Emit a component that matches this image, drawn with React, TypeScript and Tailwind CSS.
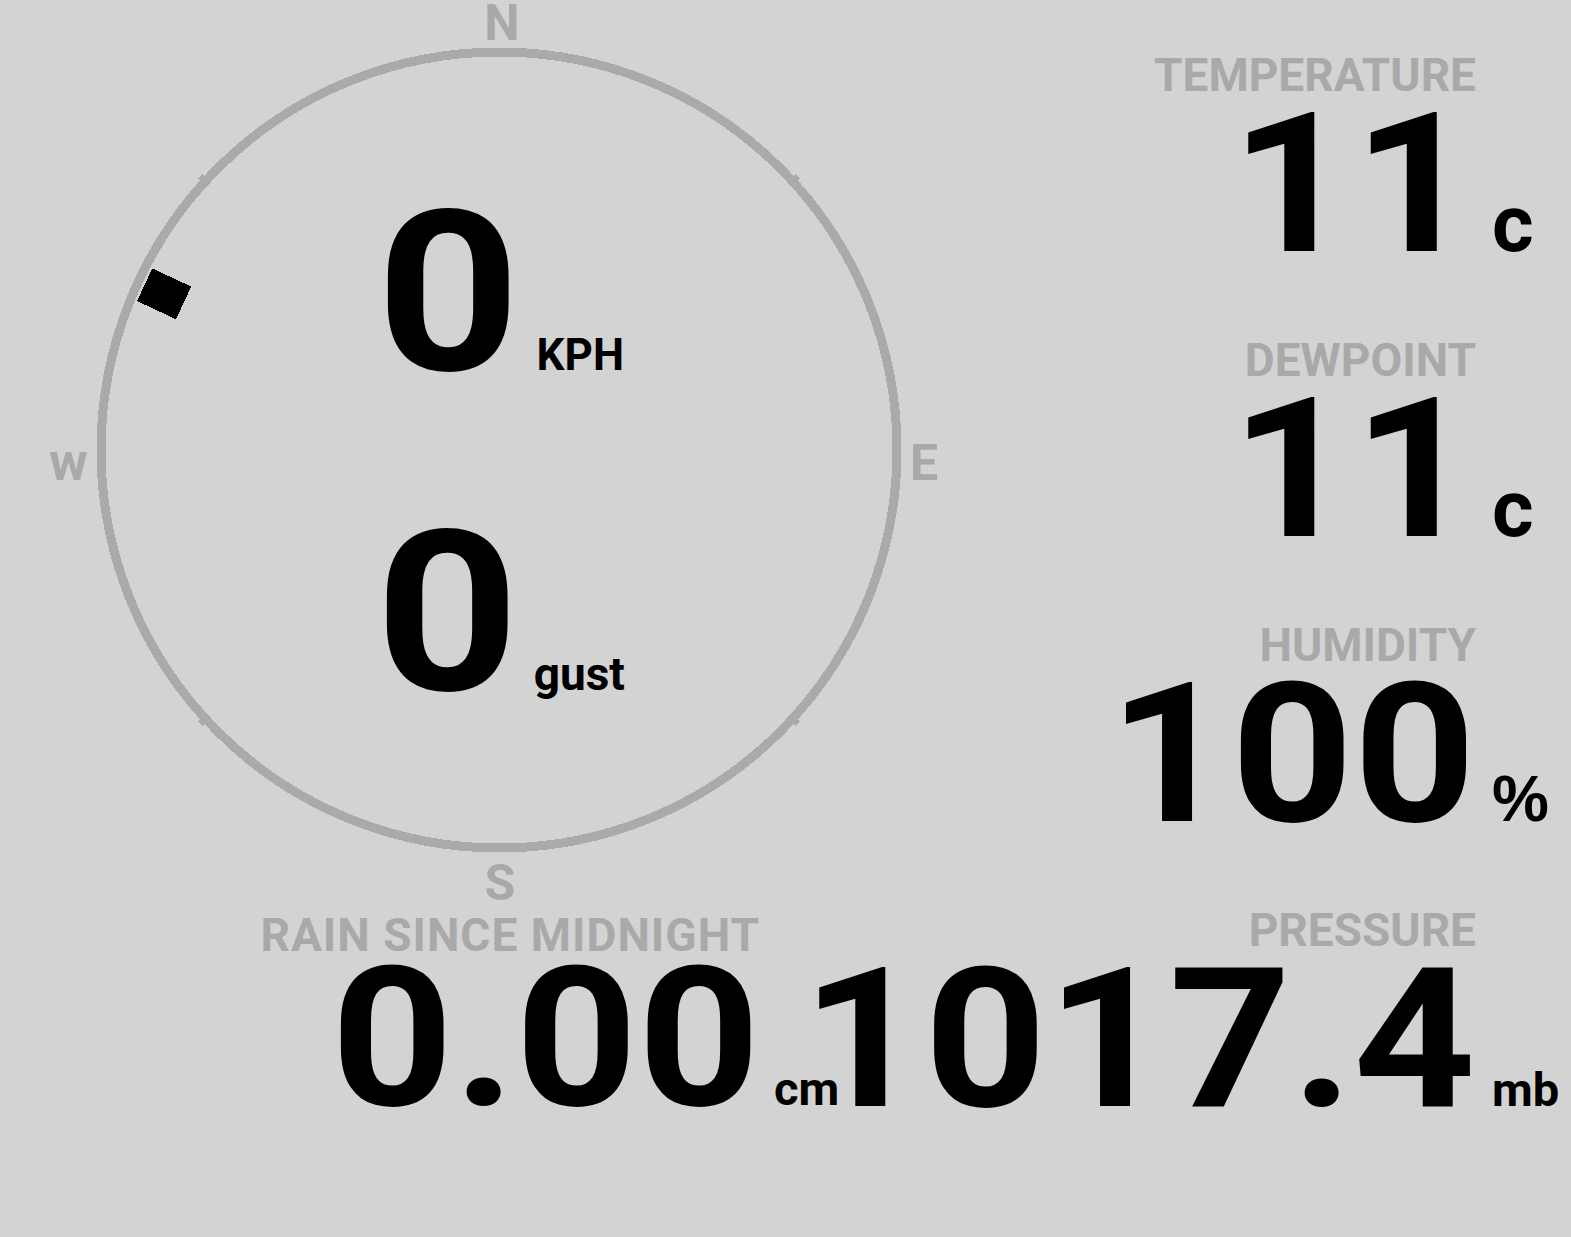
import React from 'react';

// Weather station dashboard: wind compass on the left, readings on the right

const LABEL = "font-['Roboto',sans-serif] font-bold text-[46px] leading-none text-[#a9a9a9] whitespace-nowrap";
const BIG = "inline-block font-['Roboto',sans-serif] font-bold text-[194px] leading-none text-black whitespace-nowrap origin-right scale-x-[1.1]";
const UNIT = "font-['Roboto',sans-serif] font-bold text-[47px] leading-none text-black whitespace-nowrap";

type Reading = { label: string; value: string; unit: string; unitClass?: string };

const readings: Reading[] = [
  { label: 'TEMPERATURE', value: '11', unit: 'c', unitClass: "font-['Roboto',sans-serif] font-bold text-[80px] leading-none text-black" },
  { label: 'DEWPOINT', value: '11', unit: 'c', unitClass: "font-['Roboto',sans-serif] font-bold text-[80px] leading-none text-black" },
  { label: 'HUMIDITY', value: '100', unit: '%', unitClass: "font-['Liberation_Sans',Arial,sans-serif] font-bold text-[64px] leading-none text-black" },
];

function ReadingBlock({ label, value, unit, unitClass }: Reading) {
  return (
    <div className="grid h-[285px] grid-cols-[minmax(0,1fr)_79px] content-start items-baseline">
      <div className={`${LABEL} col-start-1 row-start-1 mr-[16px] justify-self-end`}>{label}</div>
      <div className={`${BIG} col-start-1 row-start-2 mr-[16px] -mt-[10px] justify-self-end`}>{value}</div>
      <div className={`${unitClass ?? UNIT} col-start-2 row-start-2`}>{unit}</div>
    </div>
  );
}

function Compass() {
  const cx = 499;
  const cy = 450;
  const r = 398;
  return (
    <div className="relative h-[912px] w-[1000px]">
      <svg width="1000" height="912" viewBox="0 0 1000 912" className="block overflow-visible">
        <circle cx={cx} cy={cy} r={r} fill="none" stroke="#aaaaaa" strokeWidth={9} shapeRendering="crispEdges" />
        {[47.5, 132.5, 227.5, 312.5].map((a) => (
          <rect
            key={a}
            x={-3}
            y={-r - 7}
            width={6}
            height={12}
            fill="#aaaaaa"
            shapeRendering="crispEdges"
            transform={`translate(${cx} ${cy}) rotate(${a})`}
          />
        ))}
        {/* wind direction marker */}
        <rect
          x={-18}
          y={-391}
          width={36}
          height={43}
          fill="#000"
          shapeRendering="crispEdges"
          transform={`translate(${cx} ${cy}) rotate(295)`}
        />
        <g fontFamily="Roboto, sans-serif" fontWeight={700} fontSize={50} fill="#a9a9a9">
          <text x={502} y={40} textAnchor="middle">N</text>
          <text x={500} y={900} textAnchor="middle">S</text>
          <text x={910} y={480}>E</text>
          <text x={49} y={480} fontSize={53}>w</text>
        </g>
      </svg>

      {/* speed and gust */}
      <div className="absolute left-0 top-[182px] flex w-[1008px] flex-col items-center gap-[96px]">
        <div className="flex items-baseline">
          <span className="inline-block origin-center scale-x-[1.12] font-['Roboto',sans-serif] text-[224px] font-bold leading-none text-black">0</span>
          <span className="ml-[24px] font-['Roboto',sans-serif] text-[44px] font-bold leading-none text-black">KPH</span>
        </div>
        <div className="flex items-baseline">
          <span className="inline-block origin-center scale-x-[1.12] font-['Roboto',sans-serif] text-[224px] font-bold leading-none text-black">0</span>
          <span className="ml-[22px] font-['Roboto',sans-serif] text-[46px] font-bold leading-none text-black">gust</span>
        </div>
      </div>
    </div>
  );
}

export default function App() {
  return (
    <div className="min-h-screen w-full overflow-hidden bg-[#d3d3d3]">
      {/* Top: compass + readings */}
      <div className="flex">
        <Compass />
        <div className="flex-1 pt-[52px]">
          {readings.map((r) => (
            <ReadingBlock key={r.label} {...r} />
          ))}
        </div>
      </div>

      {/* Bottom: rain + pressure */}
      <div className="flex">
        <div className="grid w-[840px] grid-cols-[760px_auto] content-start items-baseline">
          <div className={`${LABEL} col-start-1 row-start-1 justify-self-end tracking-[1px]`}>RAIN SINCE MIDNIGHT</div>
          <div className={`${BIG} col-start-1 row-start-2 -mt-[16px] justify-self-end`}>0.00</div>
          <div className={`${UNIT} col-start-2 row-start-2 ml-[14px]`}>cm</div>
        </div>
        <div className="-mt-[5px] grid flex-1 grid-cols-[minmax(0,1fr)_79px] content-start items-baseline">
          <div className={`${LABEL} col-start-1 row-start-1 mr-[16px] justify-self-end`}>PRESSURE</div>
          <div className={`${BIG} col-start-1 row-start-2 mr-[16px] -mt-[10px] justify-self-end`}>1017.4</div>
          <div className={`${UNIT} col-start-2 row-start-2`}>mb</div>
        </div>
      </div>
    </div>
  );
}
